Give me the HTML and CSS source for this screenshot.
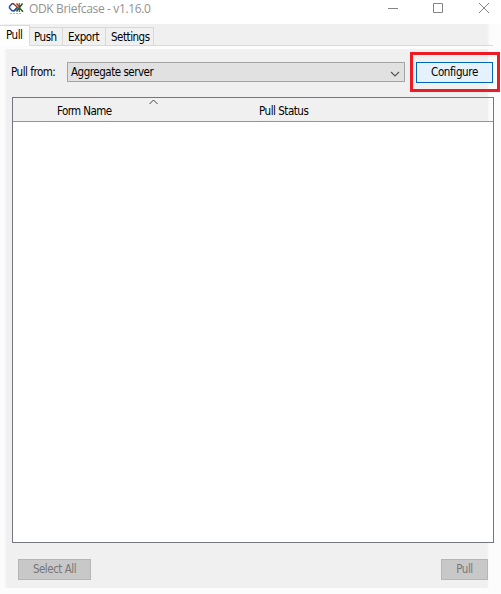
FILE: index.html
```
<!DOCTYPE html>
<html lang="en">
<head>
<meta charset="utf-8">
<title>ODK Briefcase</title>
<link rel="stylesheet" href="styles.css">
</head>
<body>
<header class="titlebar">
  <svg class="logo" width="16" height="12" viewBox="0 0 16 12" fill="none" stroke-width="1.500">
    <path d="M6 .800H4L1.500 3.500v1.500L4 7.800h2" stroke="#27509b"/>
    <path d="M5.500 .800 9.300 4.300 6 7.800" stroke="#a63b2b"/>
    <path d="M14.500 .500 8.500 8.500M11 4.500l4 4.300" stroke="#245b2b"/>
    <path d="M8.500 .500 12 4.500" stroke="#a63b2b"/>
    <path d="M11.300 0v9" stroke="#245b2b" stroke-width="1"/>
    <path d="M5 7.800h1.500L9.500 4.500" stroke="#27509b"/>
    <path d="M2 10.500h12" stroke="#b5b5b5" stroke-width="1" stroke-dasharray="2 1"/>
  </svg>
  <span class="title">ODK Briefcase - v1.16.0</span>
  <svg class="controls" width="102" height="11" viewBox="0 0 102 11" fill="none" stroke="#858585">
    <path d="M0 5.500h10M45.500 .500h9v9h-9zM91 0l10 10M101 0 91 10"/>
  </svg>
</header>
<nav class="tabs">
  <span class="tab active">Pull</span>
  <span class="tab push">Push</span>
  <span class="tab export">Export</span>
  <span class="tab settings">Settings</span>
</nav>
<main class="panel">
  <div class="source">
    <label class="label">Pull from:</label>
    <div class="select"><span class="value">Aggregate server</span>
      <svg width="10" height="7" viewBox="0 0 10 7" fill="none" stroke="#555" stroke-width="1.200"><path d="M1 1l4 4 4-4"/></svg>
    </div>
    <div class="highlight"><button class="configure"><span>Configure</span></button></div>
  </div>
  <section class="table">
    <div class="thead">
      <span class="name">Form Name</span><span class="status">Pull Status</span>
      <svg class="sort" width="9" height="6" viewBox="0 0 9 6" fill="none" stroke="#444"><path d="M.500 5l4-4 4 4"/></svg>
    </div>
  </section>
  <footer class="actions">
    <button class="disabled select-all"><span>Select All</span></button>
    <button class="disabled pull"><span>Pull</span></button>
  </footer>
</main>
</body>
</html>
```
FILE: styles.css
```
* { box-sizing: border-box; }
body { margin: 0; width: 501px; height: 594px; overflow: hidden; background: #fcfcfc; color: #000; font: 11.5px/14px "DejaVu Sans Condensed", "DejaVu Sans", sans-serif; font-stretch: condensed; letter-spacing: -.48px; white-space: nowrap; }
button { font: inherit; font-stretch: inherit; letter-spacing: inherit; padding: 0; border-radius: 0; }
svg { display: block; flex: none; }
.titlebar { height: 24px; display: flex; align-items: flex-start; background: #fff; padding: 3px 11px 0 8px; }
.title { margin: -1px 0 0 5px; font: 12px/14px "Open Sans", sans-serif; letter-spacing: -.35px; color: #929292; }
.controls { margin-left: auto; }
.tabs { height: 22px; display: flex; align-items: flex-end; background: linear-gradient(90deg, #fcfcfc, #f0f0f0 5px, #f0f0f0 487px, #fcfcfc 490px); }
.tabs::after { content: ""; flex: 1; height: 1px; margin-right: 8px; background: #d9d9d9; }
.tab { height: 19px; padding: 2px 0 0 4px; border: 1px solid #d9d9d9; border-left: 0; background: #f0f0f0; }
.active { width: 30px; height: 21px; padding: 2px 0 0 6px; background: #fff; border-bottom-color: #fff; }
.push { width: 33px; }
.export { width: 43px; padding-left: 5px; }
.settings { width: 48px; padding-left: 5px; }
.panel { height: 539px; margin-top: 3px; padding-left: 12px; background: linear-gradient(90deg, #fcfcfc 4px, #f0f0f0 7px, #f0f0f0 487px, #fcfcfc 489px); }
.source { height: 48px; display: flex; align-items: flex-start; }
.label { width: 55px; margin: 16px 0 0 -1px; }
.select { width: 338px; height: 20px; margin: 13px 0 0 1px; padding: 0 4px 0 3px; display: flex; align-items: center; justify-content: space-between; border: 1px solid #a3a3a3; background: #e1e1e1; }
.select svg { margin-top: 5px; }
.highlight { width: 90px; height: 40px; margin: 3px 0 0 5px; padding: 7px 4px 6px 3px; border: 3px solid #ed1c24; }
.configure { display: block; width: 77px; height: 21px; padding-bottom: 2px; border: 1px solid #0067b8; background: #e5f1fb; color: #000; letter-spacing: -.35px; }
.table { width: 482px; height: 446px; border: 1px solid #73757f; background: #fff; }
.thead { position: relative; height: 24px; padding: 6px 0 0 44px; display: flex; border-bottom: 1px solid #92939b; background: linear-gradient(90deg, #f0f0f0 475px, #fcfcfc 476px); }
.name { width: 202px; letter-spacing: -.6px; }
.sort { position: absolute; left: 136px; top: 1px; }
.actions { display: flex; justify-content: space-between; padding: 16px 13px 0 6px; }
.disabled { height: 21px; padding-bottom: 2px; border: 1px solid #b5b5b5; background: #c8c8c8; color: #777; }
.select-all { width: 73px; }
.pull { width: 47px; }
```
